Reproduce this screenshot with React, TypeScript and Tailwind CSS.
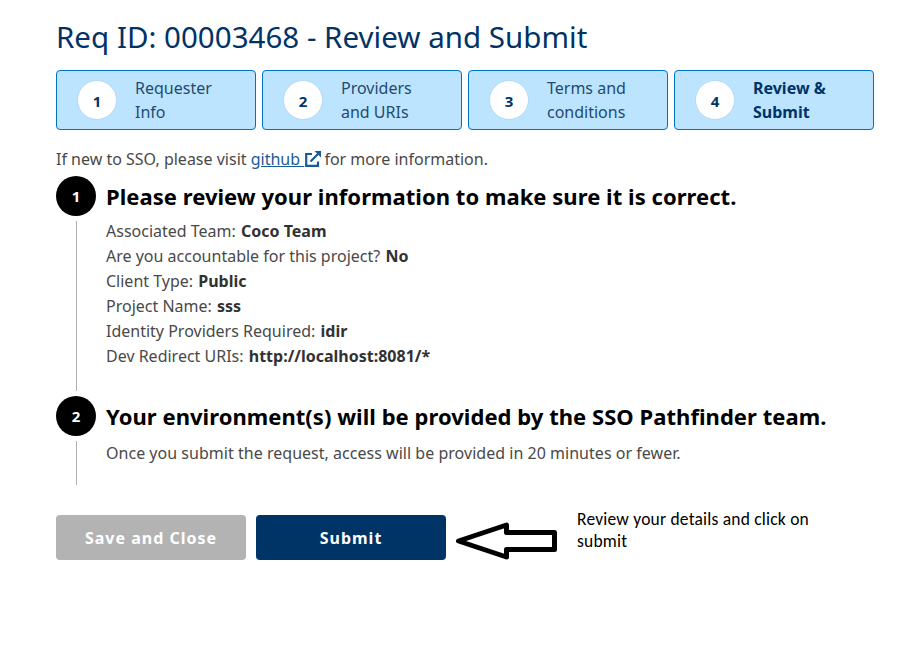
import React from "react";

const steps = [
  ["1", "Requester", "Info"],
  ["2", "Providers", "and URIs"],
  ["3", "Terms and", "conditions"],
  ["4", "Review &", "Submit"],
];

const details = [
  ["Associated Team:", "Coco Team"],
  ["Are you accountable for this project?", "No"],
  ["Client Type:", "Public"],
  ["Project Name:", "sss"],
  ["Identity Providers Required:", "idir"],
  ["Dev Redirect URIs:", "http://localhost:8081/*"],
];

function Marker({ n, line }: { n: string; line: string }) {
  return (
    <div className="flex w-10 shrink-0 flex-col items-center">
      <div className="flex h-10 w-10 items-center justify-center rounded-full bg-black text-[15px] font-bold text-white">{n}</div>
      <div className={`mt-[5px] w-px bg-[#b0b0b0] ${line}`} />
    </div>
  );
}

export default function App() {
  return (
    <div className="h-[657px] w-[900px] overflow-hidden bg-white pl-14 pt-4 font-['Noto_Sans',sans-serif] text-base text-[#494949]">
      <h1 className="h-[54px] whitespace-nowrap text-[29.5px] leading-[41px] tracking-[0.02px] text-[#003366]">Req ID: 00003468 - Review and Submit</h1>
      <div className="flex gap-1.5">
        {steps.map(([n, a, b], i) => (
          <div key={n} className="flex h-[60px] w-[200px] items-center rounded border border-[#0071c5] bg-[#bce4ff] pl-5 text-[#003366]">
            <div className="flex h-10 w-10 items-center justify-center rounded-full border border-[#b3daf7] bg-white pt-0.5 text-[15px] font-bold">{n}</div>
            <div className={`ml-[18px] leading-6 ${i === 3 ? "font-bold" : "text-[#234b70]"}`}>
              {a}
              <br />
              {b}
            </div>
          </div>
        ))}
      </div>
      <p className="mt-[17px] flex h-[29px] items-start whitespace-nowrap leading-6">
        If new to SSO, please visit&nbsp;
        <a className="flex text-[#1a5a96] underline">
          github&nbsp;
          <svg className="-mr-px ml-px mt-1 h-4 w-4" viewBox="0 0 16 16" fill="none" stroke="currentColor" strokeWidth="2.2">
            <path d="M7 3H1.200V14.800H13V10.500M5.500 10.500L13 3" />
            <path d="M9.500 0H16V6.500Z" fill="currentColor" stroke="none" />
          </svg>
        </a>
        &nbsp;for more information.
      </p>
      <section className="flex h-[220px]">
        <Marker n="1" line="h-[170px]" />
        <div className="ml-2.5">
          <h2 className="h-[43px] whitespace-nowrap text-[22px] font-bold leading-[41px] tracking-[0.04px] text-black">Please review your information to make sure it is correct.</h2>
          {details.map(([k, v]) => (
            <p key={k} className="leading-[25px]">
              {k} <strong className="ml-px text-[#313132]">{v}</strong>
            </p>
          ))}
        </div>
      </section>
      <section className="flex h-[119px]">
        <Marker n="2" line="h-11" />
        <div className="ml-2.5">
          <h2 className="h-[45px] whitespace-nowrap text-[22px] font-bold leading-[41px] tracking-[0.04px] text-black">Your environment(s) will be provided by the SSO Pathfinder team.</h2>
          <p className="leading-[25px] tracking-[0.025px]">Once you submit the request, access will be provided in 20 minutes or fewer.</p>
        </div>
      </section>
      <div className="flex">
        <button className="h-[45px] w-[190px] rounded-sm bg-[#b3b3b3] font-bold tracking-[1px] text-white">Save and Close</button>
        <button className="ml-2.5 h-[45px] w-[190px] rounded-sm bg-[#003366] font-bold tracking-[1px] text-white">Submit</button>
        <svg className="ml-[9px] mt-1 h-[44px] w-[106px] shrink-0" viewBox="455 519 106 44" fill="white" stroke="black" strokeWidth="5" strokeLinejoin="round">
          <path d="M458.500 541L506.500 525V532.500H554.500V549.500H506.500V557Z" />
        </svg>
        <p className="ml-4 -mt-[7px] whitespace-nowrap font-[Carlito,Lato,sans-serif] text-[17.5px] leading-[22px] tracking-[0.2px] text-black">
          Review your details and click on
          <br />
          submit
        </p>
      </div>
    </div>
  );
}
